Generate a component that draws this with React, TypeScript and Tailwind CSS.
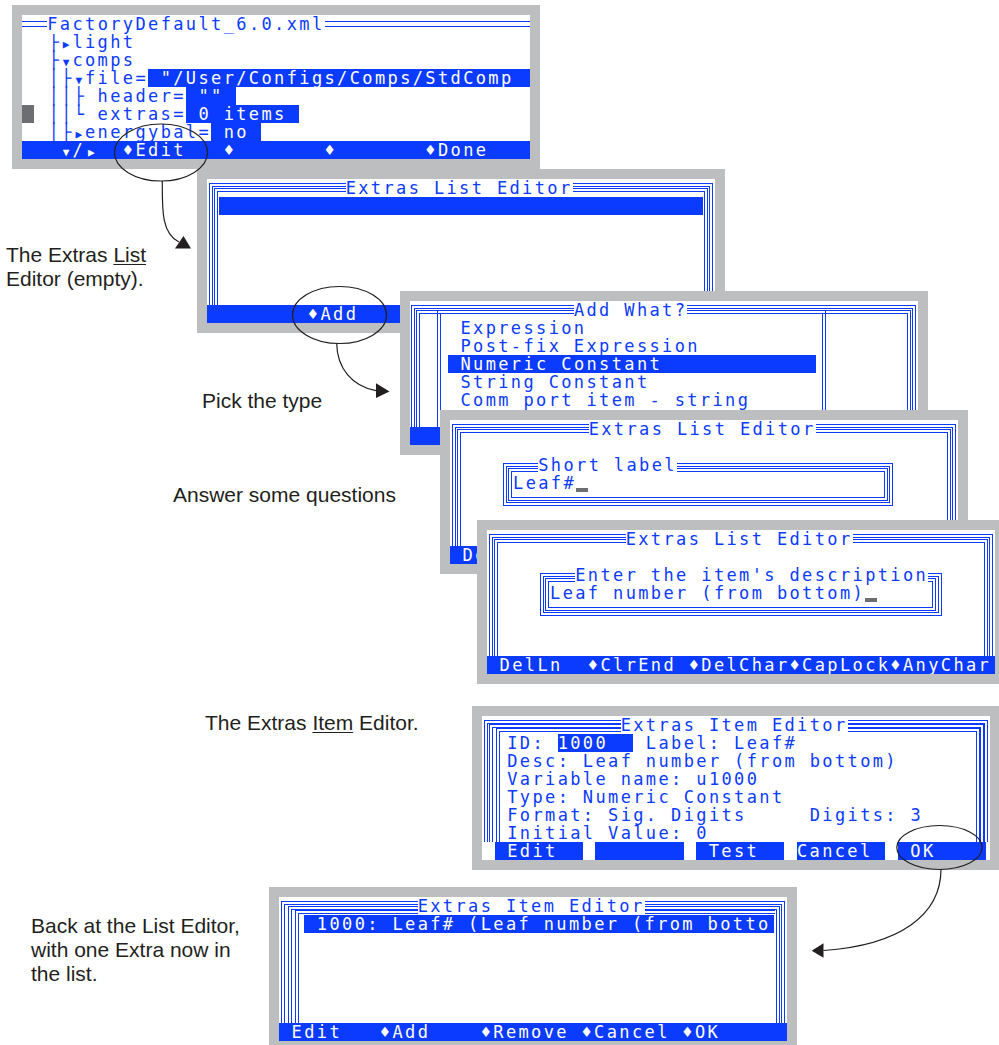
import type { ReactNode } from 'react';

// one character cell of the terminal font: 17px DejaVu Sans Mono + 2.37px tracking = 12.6px
const G = ({ c }: { c: string }) => (
  <span className="inline-block w-[12.6px] text-center tracking-normal">{c}</span>
);

// small solid disclosure triangles
const Tri = ({ c }: { c: string }) => (
  <span className="inline-block w-[12.6px] text-center text-[11px] tracking-normal">{c}</span>
);

const Hl = ({ w, children }: { w: string; children?: ReactNode }) => (
  <span className={`inline-block h-[18px] bg-[#0b3bff] align-top text-white ${w}`}>{children}</span>
);

const Cursor = ({ bar }: { bar?: boolean }) => (
  <span className="relative inline-block h-[18px] w-[12.6px] align-top">
    <span
      className={
        bar
          ? 'absolute left-0 top-[14px] h-[4px] w-[12px] bg-[#6d6e71]'
          : 'absolute left-0 top-0 h-[18px] w-[12px] bg-[#6d6e71]'
      }
    />
  </span>
);

const Win = ({ pos, children }: { pos: string; children: ReactNode }) => (
  <div className={`absolute bg-[#bcbec0] p-[10px] ${pos}`}>
    <div className="relative h-[144px] w-[508px] overflow-hidden whitespace-pre bg-white font-['DejaVu_Sans_Mono',monospace] text-[17px] leading-[18px] tracking-[2.37px] text-[#0b3bff]">
      {children}
    </div>
  </div>
);

const Row = ({ children }: { children?: ReactNode }) => <div className="h-[18px]">{children}</div>;

const Title = ({ pad, text }: { pad: string; text: string }) => (
  <Row>
    {pad}
    <span className="bg-white">{text}</span>
  </Row>
);

const Bar = ({ children }: { children: ReactNode }) => (
  <div className="mt-auto h-[18px] bg-[#0b3bff] text-white">{children}</div>
);

const frame = 'absolute border-[4px] border-b-0 border-double border-[#0b3bff]';

const EditorFrames = () => (
  <>
    <div className={`${frame} left-[2px] top-[4px] right-[2px] bottom-[18px]`} />
    <div className={`${frame} left-[7px] top-[9px] right-[7px] bottom-[18px]`} />
  </>
);

export default function App() {
  return (
    <div className="relative h-[1045px] w-[999px] overflow-hidden bg-white">
      {/* tree view */}
      <Win pos="left-[12px] top-[5px]">
        <div className="flex h-full flex-col">
          <div className="relative h-[18px]">
            <div className="absolute inset-x-0 top-[6px] h-[6px] border-y border-[#0b3bff]" />
            {'  '}
            <span className="relative bg-white">FactoryDefault_6.0.xml</span>
          </div>
          <Row>
            {'  '}
            <G c="├" />
            <Tri c="▶" />
            light
          </Row>
          <Row>
            {'  '}
            <G c="├" />
            <Tri c="▼" />
            comps
          </Row>
          <Row>
            {'  '}
            <G c="│" />
            <G c="├" />
            <Tri c="▼" />
            file=
            <Hl w="w-[400px]">{' "/User/Configs/Comps/StdComp'}</Hl>
          </Row>
          <Row>
            {'  '}
            <G c="│" />
            <G c="│" />
            <G c="├" />
            {' header='}
            <Hl w="w-[50.4px]">{' ""'}</Hl>
          </Row>
          <Row>
            <Cursor />
            {' '}
            <G c="│" />
            <G c="│" />
            <G c="└" />
            {' extras='}
            <Hl w="w-[113.4px]">{' 0 items'}</Hl>
          </Row>
          <Row>
            {'  '}
            <G c="│" />
            <G c="├" />
            <Tri c="▶" />
            energybal=
            <Hl w="w-[50.4px]">{' no'}</Hl>
          </Row>
          <Bar>
            {'   '}
            <Tri c="▼" />/<Tri c="▶" />
            {'  ♦Edit   ♦       ♦       ♦Done'}
          </Bar>
        </div>
      </Win>

      {/* empty list editor */}
      <Win pos="left-[197px] top-[169px]">
        <EditorFrames />
        <div className="relative flex h-full flex-col">
          <Title pad="           " text="Extras List Editor" />
          <div className="ml-[12px] h-[18px] w-[484px] bg-[#0b3bff]" />
          <Bar>{'        ♦Add'}</Bar>
        </div>
      </Win>

      {/* add what? */}
      <Win pos="left-[400px] top-[291px]">
        <div className={`${frame} left-[1px] top-[4px] right-[2px] bottom-[18px]`} />
        <div className={`${frame} left-[6px] top-[9px] right-[7px] bottom-[18px]`} />
        <div className={`${frame} left-[27px] top-[9px] right-[92px] bottom-[18px]`} />
        <div className="relative flex h-full flex-col">
          <Title pad="             " text="Add What?" />
          <Row>{'    Expression'}</Row>
          <Row>{'    Post-fix Expression'}</Row>
          <Row>
            {'   '}
            <Hl w="w-[368.5px]">{' Numeric Constant'}</Hl>
          </Row>
          <Row>{'    String Constant'}</Row>
          <Row>{'    Comm port item - string'}</Row>
          <Bar>{' '}</Bar>
        </div>
      </Win>

      {/* short label */}
      <Win pos="left-[440px] top-[410px]">
        <EditorFrames />
        <div className="absolute left-[53px] top-[43px] h-[43px] w-[390px] border-[4px] border-double border-[#0b3bff]" />
        <div className="absolute left-[58px] top-[48px] h-[33px] w-[380px] border-[4px] border-double border-[#0b3bff]" />
        <div className="relative flex h-full flex-col">
          <Title pad="           " text="Extras List Editor" />
          <Row />
          <Title pad="       " text="Short label" />
          <Row>
            {'     Leaf#'}
            <Cursor bar />
          </Row>
          <Bar>{' DelLn  ♦ClrEnd ♦DelChar♦CapLock♦AnyChar'}</Bar>
        </div>
      </Win>

      {/* description */}
      <Win pos="left-[477px] top-[520px]">
        <EditorFrames />
        <div className="absolute left-[53px] top-[43px] h-[43px] w-[402px] border-[4px] border-double border-[#0b3bff]" />
        <div className="absolute left-[58px] top-[48px] h-[33px] w-[391px] border-[4px] border-double border-[#0b3bff]" />
        <div className="relative flex h-full flex-col">
          <Title pad="           " text="Extras List Editor" />
          <Row />
          <Title pad="       " text="Enter the item's description" />
          <Row>
            {'     Leaf number (from bottom)'}
            <Cursor bar />
          </Row>
          <Bar>{' DelLn  ♦ClrEnd ♦DelChar♦CapLock♦AnyChar'}</Bar>
        </div>
      </Win>

      {/* item editor */}
      <Win pos="left-[472px] top-[706px]">
        <div className={`${frame} left-[2px] top-[4px] right-[2px] bottom-[18px]`} />
        <div className={`${frame} left-[7px] top-[8px] right-[6px] bottom-[18px]`} />
        <div className={`${frame} left-[14px] top-[12px] right-[10px] bottom-[18px]`} />
        <div className="relative flex h-full flex-col">
          <Title pad="           " text="Extras Item Editor" />
          <Row>
            {'  ID: '}
            <Hl w="w-[75.6px]">1000</Hl>
            {' Label: Leaf#'}
          </Row>
          <Row>{'  Desc: Leaf number (from bottom)'}</Row>
          <Row>{'  Variable name: u1000'}</Row>
          <Row>{'  Type: Numeric Constant'}</Row>
          <Row>{'  Format: Sig. Digits     Digits: 3'}</Row>
          <Row>{'  Initial Value: 0'}</Row>
          <div className="mt-auto flex h-[18px] gap-[12.6px] pl-[12.6px]">
            <span className="h-[18px] w-[88.2px] bg-[#0b3bff] text-white">{' Edit'}</span>
            <span className="h-[18px] w-[88.2px] bg-[#0b3bff] text-white" />
            <span className="h-[18px] w-[88.2px] bg-[#0b3bff] text-white">{' Test'}</span>
            <span className="h-[18px] w-[88.2px] bg-[#0b3bff] text-white">Cancel</span>
            <span className="h-[18px] w-[88.2px] bg-[#0b3bff] text-white">{' OK'}</span>
          </div>
        </div>
      </Win>

      {/* list with one extra */}
      <Win pos="left-[269px] top-[887px]">
        <div className={`${frame} left-[2px] top-[4px] right-[2px] bottom-[18px]`} />
        <div className={`${frame} left-[9px] top-[9px] right-[7px] bottom-[18px]`} />
        <div className={`${frame} border-r-0 left-[16px] top-[13px] right-[12px] bottom-[18px]`} />
        <div className="relative flex h-full flex-col">
          <Title pad="           " text="Extras Item Editor" />
          <Row>
            {'  '}
            <Hl w="w-[470px]">{' 1000: Leaf# (Leaf number (from botto'}</Hl>
          </Row>
          <Bar>{' Edit   ♦Add    ♦Remove ♦Cancel ♦OK'}</Bar>
        </div>
      </Win>

      {/* captions */}
      <div className="absolute inset-0 font-['Liberation_Sans',Arial,sans-serif] text-[21px] leading-[24px] text-[#231f20]">
        <p className="absolute left-[6px] top-[243px]">
          The Extras <span className="underline decoration-1 underline-offset-[2px]">List</span>
          <br />
          Editor (empty).
        </p>
        <p className="absolute left-[202px] top-[389px]">Pick the type</p>
        <p className="absolute left-[173px] top-[483px]">Answer some questions</p>
        <p className="absolute left-[205px] top-[711px]">
          The Extras <span className="underline decoration-1 underline-offset-[2px]">Item</span> Editor.
        </p>
        <p className="absolute left-[31px] top-[914px]">
          Back at the List Editor,
          <br />
          with one Extra now in
          <br />
          the list.
        </p>
      </div>

      {/* callout ellipses and arrows */}
      <svg className="pointer-events-none absolute inset-0" width="999" height="1045" viewBox="0 0 999 1045">
        <g fill="none" stroke="#231f20" strokeWidth="1.2">
          <ellipse cx="161" cy="152.5" rx="46.5" ry="28.5" />
          <path d="M162.3 181 C162.3 208 161 233 179 242" />
          <ellipse cx="339.5" cy="315" rx="47" ry="28.5" />
          <path d="M336.7 343.5 C337 368 352 386 376 390.6" />
          <ellipse cx="939.5" cy="847.5" rx="42.7" ry="22" />
          <path d="M941 869 C941 915 900 945 823.5 950.5" />
        </g>
        <g fill="#231f20">
          <polygon points="175,248.5 183.5,236 191,248.5" />
          <polygon points="376,383.3 389.5,391.5 376,398" />
          <polygon points="823.5,943.3 811.7,950.7 823.5,957.7" />
        </g>
      </svg>
    </div>
  );
}
